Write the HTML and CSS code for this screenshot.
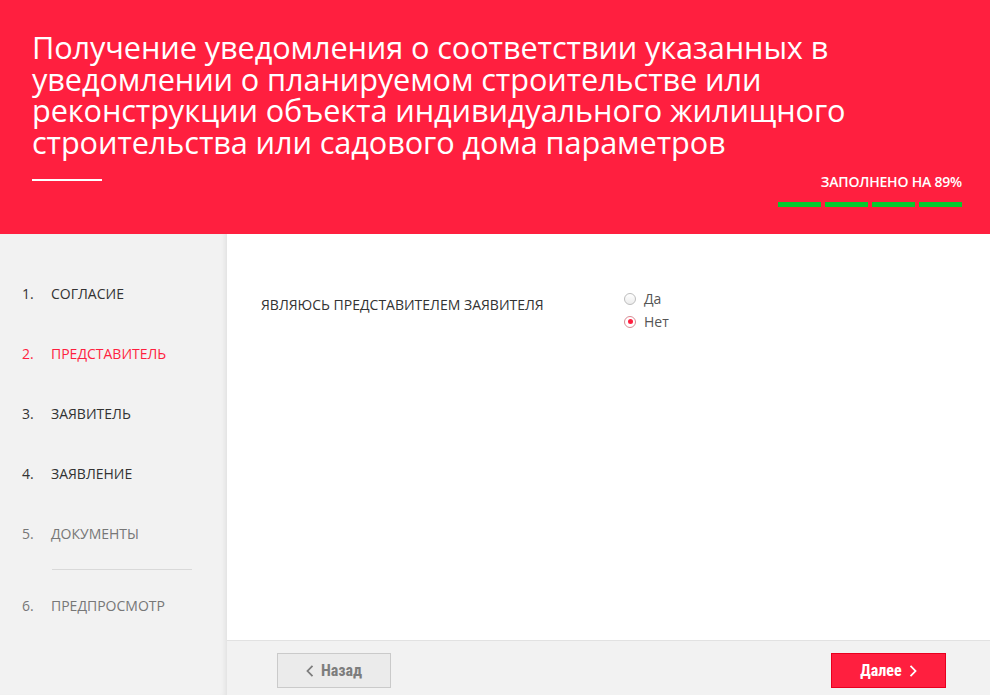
FILE: index.html
```html
<!DOCTYPE html>
<html lang="ru">
<head>
<meta charset="utf-8">
<title>Уведомление</title>
<link rel="stylesheet" href="styles.css">
</head>
<body>
<header class="hero">
  <h1 class="hero-title">Получение уведомления о соответствии указанных в уведомлении о планируемом строительстве или реконструкции объекта индивидуального жилищного строительства или садового дома параметров</h1>
  <div class="hero-bottom">
    <div class="hero-line"></div>
    <div class="progress">
      <div class="progress-text">ЗАПОЛНЕНО НА 89%</div>
      <div class="progress-bars">
        <span class="bar"></span><span class="bar"></span><span class="bar"></span><span class="bar"></span>
      </div>
    </div>
  </div>
</header>
<div class="layout">
  <nav class="sidebar">
    <ul class="steps">
      <li class="step"><span class="num">1.</span><span>СОГЛАСИЕ</span></li>
      <li class="step step-active"><span class="num">2.</span><span>ПРЕДСТАВИТЕЛЬ</span></li>
      <li class="step"><span class="num">3.</span><span>ЗАЯВИТЕЛЬ</span></li>
      <li class="step"><span class="num">4.</span><span>ЗАЯВЛЕНИЕ</span></li>
      <li class="step step-muted"><span class="num">5.</span><span>ДОКУМЕНТЫ</span></li>
      <li class="divider"></li>
      <li class="step step-muted"><span class="num">6.</span><span>ПРЕДПРОСМОТР</span></li>
    </ul>
  </nav>
  <main class="main">
    <section class="content">
      <div class="field">
        <div class="field-label">ЯВЛЯЮСЬ ПРЕДСТАВИТЕЛЕМ ЗАЯВИТЕЛЯ</div>
        <div class="radios">
          <label class="radio"><span class="radio-dot"></span><span>Да</span></label>
          <label class="radio radio-checked"><span class="radio-dot"></span><span>Нет</span></label>
        </div>
      </div>
    </section>
    <footer class="footer">
      <button class="btn btn-back" type="button"><svg class="chev" width="8" height="12" viewBox="0 0 8 12"><polyline points="6.5,0.8 1.5,6 6.5,11.2" fill="none" stroke="currentColor" stroke-width="1.8"/></svg><span>Назад</span></button>
      <button class="btn btn-next" type="button"><span>Далее</span><svg class="chev" width="8" height="12" viewBox="0 0 8 12"><polyline points="1.5,0.8 6.5,6 1.5,11.2" fill="none" stroke="currentColor" stroke-width="1.8"/></svg></button>
    </footer>
  </main>
</div>
</body>
</html>
```
FILE: styles.css
```css
* { box-sizing: border-box; }
html, body { margin: 0; padding: 0; }
body {
  width: 990px;
  height: 695px;
  overflow: hidden;
  font-family: "Open Sans", "Noto Sans", sans-serif;
  color: #333;
  background: #fff;
}
.hero {
  height: 234px;
  background: #ff1f3f;
  color: #fff;
  padding: 32px 28px 0 32px;
}
.hero-title {
  margin: 0;
  font-size: 30.7px;
  line-height: 31.6px;
  font-weight: 400;
  letter-spacing: -0.1px;
}
.hero-bottom {
  display: flex;
  justify-content: space-between;
  align-items: flex-start;
  margin-top: 16px;
}
.hero-line {
  width: 70px;
  height: 2px;
  background: #fff;
  margin-top: 5px;
}
.progress {
  display: flex;
  flex-direction: column;
  align-items: flex-end;
}
.progress-text {
  font-size: 14px;
  line-height: 16px;
  font-weight: 600;
  letter-spacing: -0.2px;
}
.progress-bars {
  display: flex;
  gap: 4px;
  margin-top: 12px;
}
.bar {
  width: 43px;
  height: 5px;
  background: #06c92e;
}
.layout {
  display: flex;
  height: 461px;
}
.sidebar {
  width: 227px;
  flex: none;
  background: #f2f2f2;
  box-shadow: inset -5px 0 5px -3px rgba(0,0,0,0.07);
}
.steps {
  list-style: none;
  margin: 0;
  padding: 29px 0 0 22px;
}
.step {
  display: flex;
  height: 60px;
  align-items: center;
  font-size: 14px;
  color: #333;
}
.step .num { width: 29px; }
.step-active { color: #ff1f3f; }
.step-muted { color: #777; }
.divider {
  height: 1px;
  width: 140px;
  margin: 6px 0 5px 30px;
  background: #d9d9d9;
}
.main {
  flex: 1;
  display: flex;
  flex-direction: column;
}
.content {
  flex: 1;
  background: #fff;
  padding: 53px 0 0 34px;
}
.field {
  display: flex;
  align-items: flex-start;
}
.field-label {
  width: 363px;
  font-size: 14px;
  line-height: 20px;
  margin-top: 8px;
  color: #333;
}
.radios {
  display: flex;
  flex-direction: column;
}
.radio {
  display: flex;
  align-items: center;
  height: 23px;
  font-size: 14px;
  color: #555;
}
.radio-dot {
  width: 12px;
  height: 12px;
  border-radius: 50%;
  border: 1px solid #bdbdbd;
  background: linear-gradient(#fff, #ececec);
  margin-right: 8px;
  position: relative;
}
.radio-checked .radio-dot {
  border-color: #d98a93;
  background: #fff;
}
.radio-checked .radio-dot::after {
  content: "";
  position: absolute;
  left: 2.5px;
  top: 2.5px;
  width: 5px;
  height: 5px;
  border-radius: 50%;
  background: #ff1f3f;
}
.footer {
  height: 55px;
  flex: none;
  background: #f2f2f2;
  border-top: 1px solid #e2e2e2;
  display: flex;
  justify-content: space-between;
  align-items: flex-start;
  padding: 12px 44px 0 50px;
}
.btn {
  height: 35px;
  display: flex;
  align-items: center;
  justify-content: center;
  gap: 7px;
  font-family: "Roboto Condensed", "DejaVu Sans Condensed", "Liberation Sans Narrow", Roboto, sans-serif;
  font-stretch: condensed;
  font-weight: 700;
  font-size: 16px;
  padding: 0;
  cursor: pointer;
}
.btn-back {
  width: 114px;
  background: #ebebeb;
  border: 1px solid #cacaca;
  color: #7d7d7d;
}
.btn-next {
  width: 115px;
  background: #ff1f3f;
  border: 1px solid #e8001f;
  color: #fff;
}
.chev { display: block; }
```
